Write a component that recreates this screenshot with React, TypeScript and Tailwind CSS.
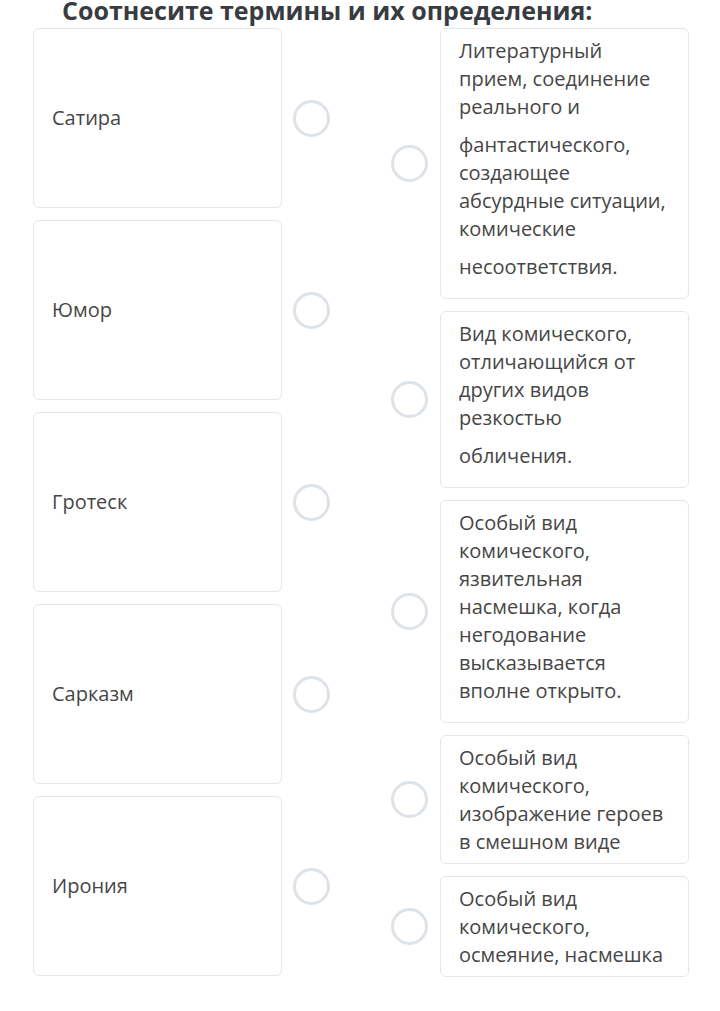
const terms = ['Сатира', 'Юмор', 'Гротеск', 'Сарказм', 'Ирония']

const definitions: { paras: string[]; spaced: boolean }[] = [
  {
    paras: [
      'Литературный прием, соединение реального и',
      'фантастического, создающее абсурдные ситуации, комические',
      'несоответствия.',
    ],
    spaced: true,
  },
  {
    paras: ['Вид комического, отличающийся от других видов резкостью', 'обличения.'],
    spaced: true,
  },
  {
    paras: ['Особый вид комического, язвительная насмешка, когда негодование высказывается вполне открыто.'],
    spaced: true,
  },
  {
    paras: ['Особый вид комического, изображение героев в смешном виде'],
    spaced: false,
  },
  {
    paras: ['Особый вид комического, осмеяние, насмешка'],
    spaced: false,
  },
]

function Circle() {
  return <div className="w-[37px] h-[37px] shrink-0 rounded-full border-[3px] border-[#dde3e8] bg-white" />
}

export default function App() {
  return (
    <div
      className="w-[720px] h-[1011px] bg-white overflow-hidden text-[#464646]"
      style={{ fontFamily: '"Open Sans", "Noto Sans", sans-serif' }}
    >
      <h1 className="mt-[-5px] ml-[62px] text-[25px] leading-[31px] font-bold text-[#383b3f] whitespace-nowrap">
        Соотнесите термины и их определения:
      </h1>

      <div className="mt-[2px] pl-[33px] flex gap-[12px]">
        {/* terms */}
        <div className="flex flex-col gap-[12px]">
          {terms.map((t) => (
            <div key={t} className="flex items-center gap-[11px]">
              <div className="w-[249px] h-[180px] flex items-center px-[18px] border border-[#e4e7e9] rounded-[6px] text-[20px] leading-[28px]">
                {t}
              </div>
              <Circle />
            </div>
          ))}
        </div>

        {/* definitions */}
        <div className="ml-[49px] flex flex-col gap-[12px]">
          {definitions.map((d, i) => (
            <div key={i} className="flex items-center gap-[12px]">
              <Circle />
              <div className="w-[249px] py-[7.5px] px-[18px] border border-[#e4e7e9] rounded-[6px] text-[20px] leading-[28px]">
                {d.paras.map((p, j) => (
                  <p key={j} className={d.spaced ? 'mb-[10px]' : ''}>
                    {p}
                  </p>
                ))}
              </div>
            </div>
          ))}
        </div>
      </div>
    </div>
  )
}
